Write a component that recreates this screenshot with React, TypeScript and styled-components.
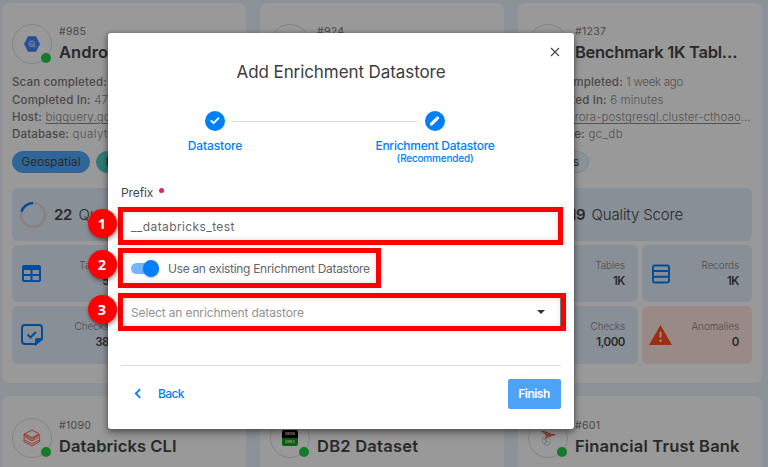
import React from 'react';
import styled, { createGlobalStyle } from 'styled-components';

const GlobalStyle = createGlobalStyle`
  * { box-sizing: border-box; }
  body { margin: 0; overflow: hidden; font-family: Inter, "Open Sans", sans-serif; background: #8d959b; }
`;

const Screen = styled.div`
  position: relative;
  width: 768px;
  height: 467px;
  overflow: hidden;
  background: #eaf4fc;
`;

/* ---------- Text ---------- */

const Text = styled.span<{ $size: number; $weight?: number; $color?: string; $track?: number; $line?: number }>`
  font-size: ${(p) => p.$size}px;
  font-weight: ${(p) => p.$weight ?? 400};
  color: ${(p) => p.$color ?? '#464646'};
  letter-spacing: ${(p) => p.$track ?? 0}px;
  line-height: ${(p) => (p.$line ? `${p.$line}px` : 'normal')};
  white-space: nowrap;
`;

/* ---------- Datastore cards ---------- */

const CardGrid = styled.div`
  display: grid;
  grid-template-columns: repeat(3, 244.4px);
  grid-template-rows: 380.5px 380.5px;
  column-gap: 13.6px;
  row-gap: 13px;
  padding: 2.8px 2px;
`;

const Card = styled.article`
  display: flex;
  flex-direction: column;
  padding: 21.4px 10px 0;
  border-radius: 7px;
  background: #fff;
`;

const CardHeader = styled.header`
  display: flex;
  gap: 7px;
  height: 40px;
`;

const LogoCircle = styled.div`
  position: relative;
  display: grid;
  place-items: center;
  flex: none;
  width: 40px;
  height: 40px;
  border: 1px solid #dcdcdc;
  border-radius: 50%;
`;

const StatusDot = styled.i`
  position: absolute;
  right: 0;
  bottom: 0;
  width: 10px;
  height: 10px;
  border-radius: 50%;
  background: #24cc48;
`;

const CardNames = styled.div`
  display: flex;
  flex-direction: column;
`;

const MetaList = styled.div`
  display: flex;
  flex-direction: column;
  margin-top: 9.5px;
  height: 70px;
`;

const MetaRow = styled.div`
  display: flex;
  gap: 3.5px;
  height: 17.3px;
  align-items: center;
`;

const HostLink = styled(Text)`
  text-decoration: underline;
  text-underline-offset: 2px;
  text-decoration-thickness: 1px;
`;

const Chips = styled.div`
  display: flex;
  gap: 6px;
  height: 22px;
  margin-top: 7.5px;
`;

const Chip = styled.span<{ $bg: string; $border?: string }>`
  display: flex;
  align-items: center;
  padding: 0 8.6px;
  border-radius: 11px;
  border: 1px solid ${(p) => p.$border ?? p.$bg};
  background: ${(p) => p.$bg};
`;

const ScoreTile = styled.div`
  display: flex;
  align-items: center;
  height: 53px;
  margin-top: 15px;
  padding-left: 7px;
  border-radius: 6px;
  background: #e5effc;
`;

const ScoreNumber = styled(Text)`
  margin-left: 7px;
  margin-right: 6.5px;
`;

const StatGrid = styled.div`
  display: grid;
  grid-template-columns: 110px 110px;
  grid-template-rows: 57px 58px;
  gap: 3.5px 4px;
  margin-top: 4px;
`;

const StatTile = styled.div<{ $alert?: boolean }>`
  display: flex;
  align-items: center;
  justify-content: space-between;
  padding: 0 13px 0 ${(p) => (p.$alert ? 7.5 : 9)}px;
  border-radius: 6px;
  background: ${(p) => (p.$alert ? '#ffe7e3' : '#e5effc')};
`;

const StatValues = styled.div`
  display: flex;
  flex-direction: column;
  align-items: flex-end;
`;

/* ---------- Dialog ---------- */

const Overlay = styled.div`
  position: absolute;
  inset: 0;
  padding: 33px 0 0 108px;
  background: rgba(0, 0, 0, 0.4);
`;

const Dialog = styled.section`
  display: flex;
  flex-direction: column;
  position: relative;
  width: 466px;
  height: 396px;
  padding: 27px 13px 0;
  border-radius: 3px;
  background: #fff;
  box-shadow: 0 5px 8px rgba(0, 0, 0, 0.24), 0 1px 5px 1px rgba(0, 0, 0, 0.3);
`;

const CloseButton = styled.button`
  position: absolute;
  top: 13.5px;
  right: 14px;
  display: flex;
  padding: 0;
  border: 0;
  background: none;
`;

const DialogTitle = styled.h2`
  display: flex;
  justify-content: center;
  margin: 0;
  height: 51px;
`;

const Stepper = styled.div`
  display: grid;
  grid-template-columns: 188px 32px 188px;
  height: 74px;
`;

const Step = styled.div`
  display: flex;
  flex-direction: column;
  align-items: center;
`;

const StepIcon = styled.div`
  display: grid;
  place-items: center;
  width: 20px;
  height: 20px;
  margin-bottom: 7px;
  border-radius: 50%;
  background: #0080f8;
`;

const StepLine = styled.div`
  height: 1px;
  margin: 10px -77px 0 -78px;
  background: #dcdcdc;
`;

const FieldLabel = styled.label`
  display: flex;
  gap: 6px;
  height: 22px;
`;

const RequiredDot = styled.i`
  width: 5px;
  height: 5px;
  margin-top: 3px;
  border-radius: 50%;
  background: #ea1c62;
`;

const Highlight = styled.div<{ $width: number; $height: number; $gap?: number }>`
  position: relative;
  display: flex;
  align-items: center;
  flex: none;
  width: ${(p) => p.$width}px;
  height: ${(p) => p.$height}px;
  margin: 0 0 ${(p) => p.$gap ?? 0}px -3px;
  padding-left: 8px;
  border: 5px solid #fe0000;
  background: #fff;
  box-shadow: inset 0 0 7px rgba(0, 0, 0, 0.12), 0 0 5px rgba(0, 0, 0, 0.08);
`;

const Badge = styled.b`
  position: absolute;
  left: -35.5px;
  top: -3.5px;
  display: grid;
  place-items: center;
  width: 29px;
  height: 29px;
  border-radius: 50%;
  background: #fe0000;
  color: #fff;
  font: bold 14.5px/1 "Noto Sans", sans-serif;
  box-shadow: 1px 2px 4px rgba(0, 0, 0, 0.45);
`;

const Switch = styled.div`
  display: flex;
  align-items: center;
  justify-content: flex-end;
  width: 28px;
  height: 11px;
  margin-right: 9px;
  border-radius: 6px;
  background: #73b6fb;
`;

const SwitchThumb = styled.i`
  flex: none;
  width: 16px;
  height: 17px;
  border-radius: 50%;
  background: #0080f8;
  box-shadow: 0 1px 2px rgba(0, 0, 0, 0.3);
`;

const SelectField = styled.div`
  display: flex;
  flex: 1;
  align-items: center;
  justify-content: space-between;
  height: 28px;
  padding-right: 15px;
  border-right: 1px solid #777;
`;

const DialogFooter = styled.footer`
  display: flex;
  align-items: center;
  justify-content: space-between;
  height: 57px;
  margin-top: 34px;
  border-top: 1px solid #dedede;
`;

const BackButton = styled.button`
  display: flex;
  align-items: center;
  gap: 16px;
  padding: 0 0 2px 13px;
  border: 0;
  background: none;
  font-family: inherit;
`;

const FinishButton = styled.button`
  width: 53px;
  height: 30px;
  padding: 0 1px 2px 0;
  border: 0;
  border-radius: 2px;
  background: #4da3f7;
  font-family: inherit;
`;

/* ---------- Icons ---------- */

const BLUE = '#0080ff';

const BigQueryLogo = () => (
  <svg width="18" height="18" viewBox="0 0 18 18">
    <path d="M5 1.3h8L17 9l-4 7.7H5L1 9z" fill="#4586fa" />
    <circle cx="8.8" cy="8.8" r="2.8" fill="none" stroke="#e6eeff" strokeWidth="0.9" />
    <path d="M7.7 8.6v1.6M8.9 7.6v2.8M10.1 9v1.2M10.9 11l1.5 1.5" stroke="#e6eeff" strokeWidth="0.8" />
  </svg>
);

const DatabricksLogo = () => (
  <svg width="18" height="18" viewBox="0 0 18 18" fill="none" stroke="#ff6450" strokeWidth="1">
    <path d="M1 5.2 9 1l7 3.8-7 3.9-7.8-4M1 5.2v2.3l8 4.3 7.6-4.2V5.8L9 10.1 1 5.8" />
    <path d="M1 8.4v2.3l8 4.2 7.6-4.1V8.6M1 11v1.7L9 17l7.6-4.2V11" />
  </svg>
);

const Db2Box = styled.div`
  display: grid;
  grid-template-rows: 8px 8px;
  width: 16px;
  height: 16px;
  overflow: hidden;
  border-radius: 2px;
  background: linear-gradient(#000 50%, #06a51c 50%);
  color: #eee;
  font: bold 5px/8px "Liberation Serif", serif;
  text-align: center;
`;

const SqlServerLogo = () => (
  <svg width="16" height="18" viewBox="0 0 16 18" fill="none">
    <path d="M2 8.5 7 7l3.5 3.5-1 5-4 1L2.5 14zM3 10l5 2.5-4 2M7 8l-2 8" stroke="#c3c8ca" strokeWidth="0.8" />
    <path d="M1.5 2.3c3 .3 6 1.3 9 2.6l4.5.8-3.8 1.1-2.9 1-3.5 2 1.3-3L2 3.5z" fill="#f3a09a" />
    <path d="M1.5 2.3c3 .3 6 1.3 9 2.6l4.5.8-3.8 1.1-2.9 1-3.5 2M5 3l2 4 2.5-2.5 1 2.5" stroke="#d84742" strokeWidth="0.9" />
  </svg>
);

const ScoreRing = () => (
  <svg width="28" height="28" viewBox="0 0 28 28" fill="none" strokeWidth="2.5">
    <circle cx="14" cy="14" r="12" stroke="#dfd9d8" />
    <path d="M2.5 10.6A12 12 0 0 1 14 2" stroke={BLUE} />
  </svg>
);

const TableIcon = () => (
  <svg width="21" height="19" viewBox="0 0 21 19">
    <path
      fillRule="evenodd"
      fill={BLUE}
      d="M3 1h15a2 2 0 0 1 2 2v13a2 2 0 0 1-2 2H3a2 2 0 0 1-2-2V3a2 2 0 0 1 2-2zM3 6v4h6.5V6zm8.5 0v4H18V6zM3 12v4h6.5v-4zm8.5 0v4H18v-4z"
    />
  </svg>
);

const RowsIcon = () => (
  <svg width="20" height="20" viewBox="0 0 20 20" fill="none" stroke={BLUE} strokeWidth="1.9">
    <rect x="2" y="1.5" width="16" height="17" rx="1.5" />
    <path d="M2 7h16M2 12.8h16" />
  </svg>
);

const CheckNoteIcon = () => (
  <svg width="22" height="22" viewBox="0 0 22 22" fill="none" stroke={BLUE} strokeWidth="2">
    <path d="M14 20H4a3 3 0 0 1-3-3V4a3 3 0 0 1 3-3h14a3 3 0 0 1 3 3v10z" />
    <path d="M15 20v-3.5a1.5 1.5 0 0 1 1.5-1.5H21z" fill={BLUE} />
    <path d="m6.5 10.5 3 3 5.5-5.5" />
  </svg>
);

const WarningIcon = () => (
  <svg width="23" height="20" viewBox="0 0 23 20">
    <path d="M11.5 0 23 20H0z" fill="#ff531c" />
    <path d="M11.5 6.8v5.8M11.5 14.6V17" stroke="#ffe7e3" strokeWidth="2" />
  </svg>
);

const CloseIcon = () => (
  <svg width="10" height="10" viewBox="0 0 10 10" stroke="#4a4a4a" strokeWidth="1.2">
    <path d="m1 1 8 8M9 1 1 9" />
  </svg>
);

const CheckIcon = () => (
  <svg width="12" height="12" viewBox="0 0 12 12" fill="none" stroke="#fff" strokeWidth="1.9">
    <path d="m1.8 5.4 2.8 2.8 5.4-5.5" />
  </svg>
);

const PencilIcon = () => (
  <svg width="12" height="12" viewBox="0 0 12 12">
    <path d="M1 8.3 7.6 1.7q.9-.9 1.8 0l.4.4q.9.9 0 1.8L3.2 10.5H1z" fill="#fff" />
    <path d="m7.2 2.6 2 2" stroke="#0080f8" strokeWidth="0.5" />
  </svg>
);

const ChevronIcon = () => (
  <svg width="8" height="11" viewBox="0 0 8 11" fill="none" stroke="#0080f8" strokeWidth="1.8">
    <path d="M6.2 1.1 1.8 5.5l4.4 4.4" />
  </svg>
);

const CaretIcon = () => (
  <svg width="8" height="4" viewBox="0 0 8 4" fill="#333">
    <path d="M0 0h8L4 4z" />
  </svg>
);

/* ---------- Composition ---------- */

type Datastore = {
  id: string;
  name: string;
  nameTrack: number;
  logo?: React.ReactNode;
  completed?: string;
  duration?: string;
  host?: string;
  hostCut?: boolean;
  database?: string;
  chips?: { label: string; bg: string; border?: string }[];
  score?: string;
  tables?: string;
  checks?: string;
};

const META = '#8c8c8c';
const META_STRONG = '#7b7b7b';

type MetaProps = { label: string; value: string; link?: boolean; cut?: boolean; track?: number };

const Meta = ({ label, value, link, cut, track = 0.1 }: MetaProps) => {
  const Value = link ? HostLink : Text;
  return (
    <MetaRow>
      <Text $size={11.5} $weight={500} $color={META_STRONG} $track={0.16}>{label}</Text>
      <Text $size={11.5} $weight={300} $color={META} $track={track}>
        <Value $size={11.5} $weight={300} $color={META} $track={track}>{value}</Value>
        {cut && '…'}
      </Text>
    </MetaRow>
  );
};

const Stat = ({ icon, label, value, alert }: { icon: React.ReactNode; label: string; value: string; alert?: boolean }) => (
  <StatTile $alert={alert}>
    {icon}
    <StatValues>
      <Text $size={10} $weight={300} $color="#7d7d7d" $track={-0.1} $line={15}>{label}</Text>
      <Text $size={11.5} $weight={600} $track={-0.45} $line={16}>{value}</Text>
    </StatValues>
  </StatTile>
);

const DatastoreCard = ({ store }: { store: Datastore }) => (
  <Card>
    <CardHeader>
      <LogoCircle>
        {store.logo}
        <StatusDot />
      </LogoCircle>
      <CardNames>
        <Text $size={10.5} $color="#7a7a7a" $track={0.3} $line={15}>{store.id}</Text>
        <Text $size={16.5} $weight={600} $track={store.nameTrack} $line={26}>{store.name}</Text>
      </CardNames>
    </CardHeader>
    {store.host && (
      <>
        <MetaList>
          <Meta label="Scan completed:" value={store.completed ?? ''} track={-0.3} />
          <Meta label="Completed In:" value={store.duration ?? ''} />
          <Meta label="Host:" value={store.host} cut={store.hostCut} link />
          <Meta label="Database:" value={store.database ?? ''} track={0.45} />
        </MetaList>
        <Chips>
          {store.chips?.map((chip) => (
            <Chip key={chip.label} $bg={chip.bg} $border={chip.border}>
              <Text $size={11.5} $track={0.13}>{chip.label}</Text>
            </Chip>
          ))}
        </Chips>
        <ScoreTile>
          <ScoreRing />
          <ScoreNumber $size={15} $weight={600} $track={-0.4}>{store.score}</ScoreNumber>
          <Text $size={15} $weight={300} $track={-0.16}>Quality Score</Text>
        </ScoreTile>
        <StatGrid>
          <Stat icon={<TableIcon />} label="Tables" value={store.tables ?? ''} />
          <Stat icon={<RowsIcon />} label="Records" value="1K" />
          <Stat icon={<CheckNoteIcon />} label="Checks" value={store.checks ?? ''} />
          <Stat icon={<WarningIcon />} label="Anomalies" value="0" alert />
        </StatGrid>
      </>
    )}
  </Card>
);

const datastores: Datastore[] = [
  {
    id: '#985', name: 'Android', nameTrack: 0.1, logo: <BigQueryLogo />,
    completed: '1 week ago', duration: '47 seconds', host: 'bigquery.googleapis.com', database: 'qualytics',
    chips: [{ label: 'Geospatial', bg: '#50a8ff' }, { label: 'BigQuery', bg: '#4bcfc0' }],
    score: '22', tables: '5', checks: '38',
  },
  { id: '#924', name: '', nameTrack: 0 },
  {
    id: '#1237', name: 'Benchmark 1K Tabl…', nameTrack: -0.29,
    completed: '1 week ago', duration: '6 minutes', host: 'aurora-postgresql.cluster-cthoao', hostCut: true, database: 'gc_db',
    chips: [{ label: 'Metrics', bg: '#e8f3ff', border: '#cfe2f5' }],
    score: '19', tables: '1K', checks: '1,000',
  },
  { id: '#1090', name: 'Databricks CLI', nameTrack: 0.09, logo: <DatabricksLogo /> },
  { id: '#712', name: 'DB2 Dataset', nameTrack: 0.24, logo: <Db2Box><span>IBM</span><span>DB2</span></Db2Box> },
  { id: '#601', name: 'Financial Trust Bank', nameTrack: 0.18, logo: <SqlServerLogo /> },
];

export default function App() {
  return (
    <Screen>
      <GlobalStyle />
      <CardGrid>
        {datastores.map((store) => (
          <DatastoreCard key={store.id} store={store} />
        ))}
      </CardGrid>
      <Overlay>
        <Dialog>
          <CloseButton aria-label="Close"><CloseIcon /></CloseButton>
          <DialogTitle>
            <Text $size={17} $color="#3c3c3c" $track={-0.08} $line={25}>Add Enrichment Datastore</Text>
          </DialogTitle>
          <Stepper>
            <Step>
              <StepIcon><CheckIcon /></StepIcon>
              <Text $size={12} $weight={500} $color="#0080f8" $track={-0.13} $line={16}>Datastore</Text>
            </Step>
            <StepLine />
            <Step>
              <StepIcon><PencilIcon /></StepIcon>
              <Text $size={12} $weight={500} $color="#0080f8" $track={-0.25} $line={16}>Enrichment Datastore</Text>
              <Text $size={10} $weight={500} $color="#0080f8" $track={-0.2} $line={9}>(Recommended)</Text>
            </Step>
          </Stepper>
          <FieldLabel>
            <Text $size={12} $track={-0.1} $line={16}>Prefix</Text>
            <RequiredDot />
          </FieldLabel>
          <Highlight $width={445} $height={38} $gap={3}>
            <Badge>1</Badge>
            <Text $size={12} $color="#666" $track={0.4}>__databricks_test</Text>
          </Highlight>
          <Highlight $width={263} $height={40} $gap={5}>
            <Badge>2</Badge>
            <Switch><SwitchThumb /></Switch>
            <Text $size={12} $color="#666" $track={-0.3}>Use an existing Enrichment Datastore</Text>
          </Highlight>
          <Highlight $width={448} $height={38}>
            <Badge>3</Badge>
            <SelectField>
              <Text $size={12} $color="#929292" $track={-0.14}>Select an enrichment datastore</Text>
              <CaretIcon />
            </SelectField>
          </Highlight>
          <DialogFooter>
            <BackButton>
              <ChevronIcon />
              <Text $size={12} $weight={500} $color="#0080f8" $track={-0.6}>Back</Text>
            </BackButton>
            <FinishButton>
              <Text $size={12} $weight={600} $color="#fff" $track={-0.5}>Finish</Text>
            </FinishButton>
          </DialogFooter>
        </Dialog>
      </Overlay>
    </Screen>
  );
}
